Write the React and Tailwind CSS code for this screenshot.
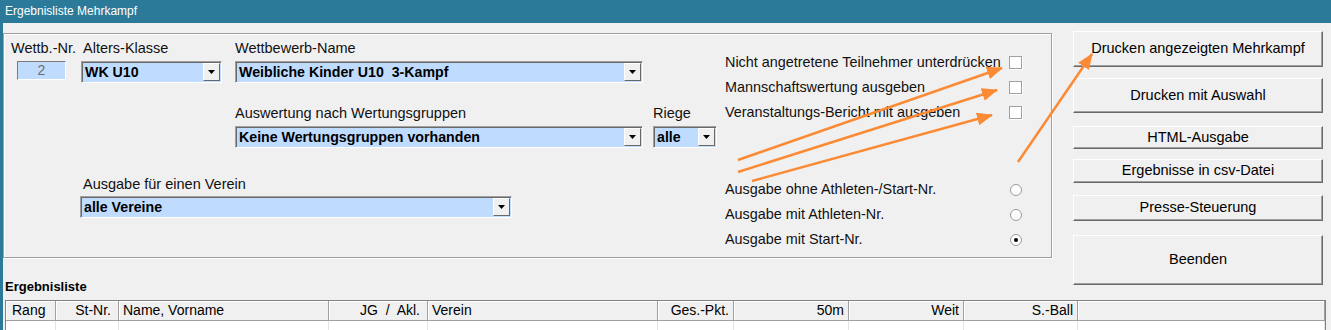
import React from "react";

const sans = { fontFamily: '"Liberation Sans", Arial, sans-serif' };

// little black triangle used by the combo boxes
const DropArrow = () => (
  <div className="w-[17px] my-[1px] mr-[1px] bg-[#f0f0f0] border border-t-white border-l-white border-b-[#696969] border-r-[#696969] flex items-center justify-center">
    <svg width="7" height="4" viewBox="0 0 7 4">
      <polygon points="0,0 7,0 3.5,4" fill="#000" />
    </svg>
  </div>
);

const Combo = ({ value, className }) => (
  <div
    className={`${className} h-[22px] flex bg-[#bfdcff] border border-t-[#a0a0a0] border-l-[#a0a0a0] border-b-white border-r-white shadow-[inset_1px_1px_0_#696969]`}
  >
    <span className="flex-1 pl-[3px] font-bold text-[14.2px] leading-[20px] text-black whitespace-pre overflow-hidden">
      {value}
    </span>
    <DropArrow />
  </div>
);

const Label = ({ children, className = "" }) => (
  <div className={`h-[16px] leading-[16px] text-[14.5px] text-[#111] whitespace-nowrap ${className}`}>
    {children}
  </div>
);

const Checkbox = () => (
  <div className="w-[13px] h-[13px] bg-white border border-[#a0a0a0] shadow-[1px_1px_0_#fff]" />
);

const Radio = ({ checked }) => (
  <div className="w-[13px] flex justify-center">
    <div className="w-[12px] h-[12px] rounded-full bg-white border border-[#9a9a9a] flex items-center justify-center">
      {checked && <div className="w-[4px] h-[4px] rounded-full bg-black" />}
    </div>
  </div>
);

const Button = ({ children, className }) => (
  <div
    className={`${className} w-[250px] flex items-center justify-center bg-[#f0f0f0] border border-t-white border-l-white border-b-[#696969] border-r-[#696969] shadow-[inset_-1px_-1px_0_#a0a0a0] text-[14.5px] text-black whitespace-nowrap`}
  >
    {children}
  </div>
);

const columns = [
  { label: "Rang", w: "w-[50px]", align: "justify-start pl-[6px]" },
  { label: "St-Nr.", w: "w-[63px]", align: "justify-end pr-[7px]" },
  { label: "Name, Vorname", w: "w-[210px]", align: "justify-start pl-[4px]" },
  { label: "JG  /  Akl.", w: "w-[99px]", align: "justify-end pr-[7px]" },
  { label: "Verein", w: "w-[230px]", align: "justify-start pl-[4px]" },
  { label: "Ges.-Pkt.", w: "w-[76px]", align: "justify-end pr-[4px]" },
  { label: "50m", w: "w-[115px]", align: "justify-end pr-[4px]" },
  { label: "Weit", w: "w-[115px]", align: "justify-end pr-[4px]" },
  { label: "S.-Ball", w: "w-[114px]", align: "justify-end pr-[4px]" },
  { label: "", w: "flex-1", align: "" },
];

const checks = [
  "Nicht angetretene Teilnehmer unterdrücken",
  "Mannschaftswertung ausgeben",
  "Veranstaltungs-Bericht mit ausgeben",
];

const radios = [
  { label: "Ausgabe ohne Athleten-/Start-Nr.", checked: false },
  { label: "Ausgabe mit Athleten-Nr.", checked: false },
  { label: "Ausgabe mit Start-Nr.", checked: true },
];

// orange annotation arrows drawn over the form
const arrows = [
  [738, 160, 1002, 68],
  [738, 172, 997, 90],
  [752, 181, 992, 115],
  [1018, 162, 1092, 54],
];

export default function App() {
  return (
    <div className="relative w-[1331px] h-[330px] overflow-hidden bg-[#f0f0f0]" style={sans}>
      {/* Title bar */}
      <div className="h-[23px] bg-[#2c7a99] text-white text-[12px] leading-[23px] pl-[5px]">
        Ergebnisliste Mehrkampf
      </div>

      <div className="h-[307px] border-l-[3px] border-[#2c7a99]">
        <div className="flex items-start">
          {/* Left: group box + list caption */}
          <div className="flex flex-col">
            <div className="mt-[10px] w-[1049px] h-[225px] flex border border-[#a0a0a0] shadow-[1px_1px_0_#fff,inset_1px_1px_0_#fff]">
              {/* selection fields */}
              <div className="w-[721px] pl-[7px] pt-[6px] flex flex-col">
                <div className="flex">
                  <div className="w-[70px] flex flex-col">
                    <Label>Wettb.-Nr.</Label>
                    <div className="mt-[5px] ml-[6px] w-[49px] h-[19px] bg-[#bfdcff] border border-t-[#7a7a7a] border-l-[#7a7a7a] border-b-white border-r-white text-center text-[14px] leading-[17px] text-[#6d6d6d]">
                      2
                    </div>
                  </div>
                  <div className="flex flex-col">
                    <Label className="pl-[2px]">Alters-Klasse</Label>
                    <Combo value="WK U10" className="mt-[5px] w-[141px]" />
                  </div>
                  <div className="ml-[13px] flex flex-col">
                    <Label className="w-[121px] overflow-hidden">Wettbewerb-Name</Label>
                    <Combo value="Weibliche Kinder U10  3-Kampf" className="mt-[5px] w-[408px]" />
                  </div>
                </div>

                <div className="mt-[22px] ml-[224px] flex">
                  <div className="flex flex-col">
                    <Label>Auswertung nach Wertungsgruppen</Label>
                    <Combo value="Keine Wertungsgruppen vorhanden" className="mt-[5px] w-[408px]" />
                  </div>
                  <div className="ml-[10px] flex flex-col">
                    <Label>Riege</Label>
                    <Combo value="alle" className="mt-[5px] w-[64px]" />
                  </div>
                </div>

                <div className="mt-[28px] ml-[69px] flex flex-col">
                  <Label className="pl-[3px]">Ausgabe für einen Verein</Label>
                  <Combo value="alle Vereine" className="mt-[4px] w-[432px]" />
                </div>
              </div>

              {/* options */}
              <div className="pt-[16px] flex flex-col text-[14.4px] text-[#111]">
                {checks.map((c) => (
                  <div key={c} className="w-[297px] h-[25px] flex items-center justify-between">
                    <span className="whitespace-nowrap">{c}</span>
                    <Checkbox />
                  </div>
                ))}
                <div className="mt-[52px] flex flex-col">
                  {radios.map((r) => (
                    <div key={r.label} className="w-[297px] h-[25px] flex items-center justify-between">
                      <span className="whitespace-nowrap">{r.label}</span>
                      <Radio checked={r.checked} />
                    </div>
                  ))}
                </div>
              </div>
            </div>

            <div className="mt-[21px] ml-[2px] h-[16px] leading-[16px] text-[13px] font-bold text-black">
              Ergebnisliste
            </div>
          </div>

          {/* Right: buttons */}
          <div className="ml-[21px] mt-[8px] flex flex-col">
            <Button className="h-[36px]">Drucken angezeigten Mehrkampf</Button>
            <Button className="mt-[11px] h-[35px]">Drucken mit Auswahl</Button>
            <Button className="mt-[13px] h-[23px]">HTML-Ausgabe</Button>
            <Button className="mt-[10px] h-[24px]">Ergebnisse in csv-Datei</Button>
            <Button className="mt-[12px] h-[26px]">Presse-Steuerung</Button>
            <Button className="mt-[14px] h-[50px]">Beenden</Button>
          </div>
        </div>

        {/* Result grid */}
        <div className="mt-[5px] ml-[2px] w-[1321px] border border-[#828282] bg-white">
          <div className="flex h-[20px] bg-[#f0f0f0] border-b border-[#a0a0a0]">
            {columns.map((c, i) => (
              <div
                key={i}
                className={`${c.w} ${c.align} flex items-center h-full border-r border-[#a0a0a0] shadow-[inset_1px_1px_0_#fff] text-[14px] text-black whitespace-pre`}
              >
                {c.label}
              </div>
            ))}
          </div>
          <div className="flex h-[20px] bg-white">
            {columns.map((c, i) => (
              <div key={i} className={`${c.w} h-full border-r border-[#e3e3e3]`} />
            ))}
          </div>
        </div>
      </div>

      <svg className="absolute inset-0 pointer-events-none" width="1331" height="330">
        <defs>
          <marker id="head" markerUnits="userSpaceOnUse" markerWidth="16" markerHeight="13" refX="15" refY="6.5" orient="auto">
            <polygon points="0,0 16,6.5 0,13" fill="#fb8a35" />
          </marker>
        </defs>
        {arrows.map(([x1, y1, x2, y2], i) => (
          <line key={i} x1={x1} y1={y1} x2={x2} y2={y2} stroke="#fb8a35" strokeWidth="2.5" markerEnd="url(#head)" />
        ))}
      </svg>
    </div>
  );
}
